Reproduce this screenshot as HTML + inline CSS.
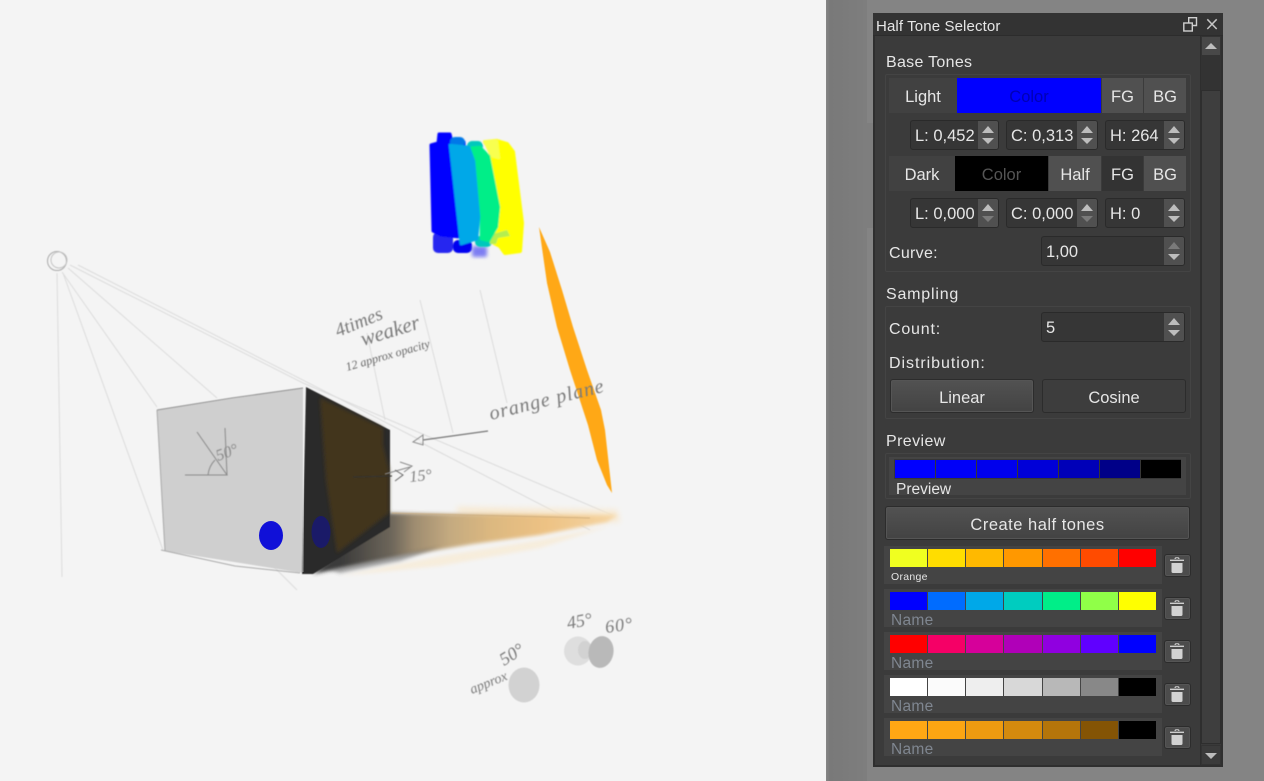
<!DOCTYPE html>
<html><head><meta charset="utf-8">
<style>
html,body{margin:0;padding:0;width:1264px;height:781px;overflow:hidden;background:#848484}
body{position:relative;font-family:"Liberation Sans",sans-serif;color:#e6e6e6}
.a{position:absolute;box-sizing:border-box}
.t{position:absolute;white-space:nowrap;font-size:16px;line-height:20px;color:#e6e6e6;margin-top:3.5px}
.c{position:absolute;box-sizing:border-box;display:flex;align-items:center;justify-content:center;font-size:16.5px;white-space:nowrap;color:#e6e6e6;padding-top:4px}
.g{position:absolute;box-sizing:border-box;border:1px solid #444;border-radius:2px}
.f{position:absolute;box-sizing:border-box;background:#363636;border:1px solid #2a2a2a;border-radius:3px;height:30px;font-size:16.5px;line-height:30px;white-space:nowrap;color:#e6e6e6;overflow:hidden;padding-left:4px}
.s{position:absolute;right:0;top:0;bottom:0;width:20px;background:#505050}
.u,.d{position:absolute;left:4px;width:0;height:0;border-left:6px solid transparent;border-right:6px solid transparent}
.u{top:5px;border-bottom:7px solid #bdbdbd}
.d{bottom:5px;border-top:6px solid #bdbdbd}
.dis.u{border-bottom-color:#7a7a7a}.dis.d{border-top-color:#7a7a7a}
.btn{background:linear-gradient(#525252,#434343);border:1px solid #2c2c2c;box-shadow:inset 0 0 0 1px #555;border-radius:3px}
.row{position:absolute;left:884px;width:278px;height:38px;background:#444;overflow:hidden}
.sw{position:absolute;top:3px;height:18px}
.nm{position:absolute;left:7px;top:22px;font-size:15.5px;line-height:20px;color:#7f8690;letter-spacing:.3px}
.tr{position:absolute;left:1164px;width:27px;height:23px;background:#4c4c4c;border:1px solid #2c2c2c;box-shadow:inset 0 0 0 1px #555;border-radius:3px;box-sizing:border-box}
</style></head><body>

<!-- canvas -->
<svg class="a" style="left:0;top:0" width="826" height="781" viewBox="0 0 826 781">
<defs>
<filter id="b1" x="-20%" y="-20%" width="140%" height="140%"><feGaussianBlur stdDeviation=".6"/></filter>
<filter id="b15" x="-20%" y="-20%" width="140%" height="140%"><feGaussianBlur stdDeviation=".9"/></filter>
<filter id="b2" x="-20%" y="-20%" width="140%" height="140%"><feGaussianBlur stdDeviation="1.8"/></filter>
<filter id="b3" x="-20%" y="-60%" width="140%" height="220%"><feGaussianBlur stdDeviation="3"/></filter>
<linearGradient id="sh" x1="340" y1="0" x2="615" y2="0" gradientUnits="userSpaceOnUse">
<stop offset="0" stop-color="#3a3a3a"/><stop offset=".19" stop-color="#6e675b"/><stop offset=".27" stop-color="#9e8c70"/><stop offset=".4" stop-color="#c4aa80"/><stop offset=".55" stop-color="#dcb880"/><stop offset=".75" stop-color="#edc284"/><stop offset="1" stop-color="#f6d6a4"/>
</linearGradient>
</defs>
<rect width="826" height="781" fill="#f4f4f4"/>
<g stroke="#dcdcdc" stroke-width="1" fill="none" filter="url(#b1)">
<path d="M57 273 L62 577"/><path d="M63 273 L163 550"/><path d="M62 272 L157 407"/><path d="M68 268 L217 398"/>
<path d="M70 265 L303 383 L612 515"/><path d="M78 265 L420 440"/>
<path d="M480 290 L507 403"/><path d="M420 300 L453 433"/><path d="M367 333 L385 420"/>
<path d="M260 553 L297 590"/><path d="M420 442 L590 530"/>
</g>
<!-- shadow -->
<g filter="url(#b1)">
<polygon points="457,507 617,510 620,522 520,520 457,513" fill="#f8e6c8" opacity=".8" filter="url(#b3)"/>
<polygon points="340,576 440,556 540,540 610,526 540,548 440,566" fill="#f8ead2" opacity=".7" filter="url(#b2)"/>
<polygon points="388,513 560,515 617,515 607,522 540,535 473,544 407,555 313,574" fill="url(#sh)" filter="url(#b2)"/>
<polygon points="330,570 380,559 440,547 400,561 340,573" fill="#555" opacity=".5" filter="url(#b2)"/>
<path d="M392 513 L590 518" stroke="#c8a878" stroke-width=".8" fill="none"/>
<!-- cube -->
<polygon points="157,410 303,388 303,573 165,551" fill="#cfcfcf"/>
<path d="M157 410 L232 398 L303 388" stroke="#8f8f8f" stroke-width="1" fill="none"/>
<path d="M157 410 L165 551" stroke="#a8a8a8" stroke-width="1" fill="none"/>
<path d="M161 550 L235 566 L300 573" stroke="#aaa" stroke-width="1" fill="none"/>
<polygon points="306,387 390,430 390,527 313,574 302,574" fill="#2a2a2a"/>
<polygon points="320,398 383,428 383,445 389,470 389,513 337,553 326,480" fill="#43351f" filter="url(#b2)"/>
</g>
<path d="M304 388 L303 572" stroke="#eee" stroke-width=".8" opacity=".6" fill="none"/>
<ellipse cx="271" cy="535.5" rx="12" ry="14.5" fill="#1010d8"/>
<ellipse cx="321" cy="532" rx="9.5" ry="16" fill="#1a1a68"/>
<!-- angle marks -->
<g fill="none" stroke="#8a8a8a" stroke-width="1" filter="url(#b1)">
<path d="M185 475 L227 475 L197 432"/><path d="M225 428 L227 475"/><path d="M208 475 Q209 466 215 460"/>
<path d="M353 477 L392 476" stroke="#333"/><path d="M385 474 L410 467 M400 462 L412 466 L404 472"/>
<path d="M423 440 L488 431" stroke="#777" stroke-width="1.3"/><path d="M423 435 L413 442 L423 445 Z"/>
<path d="M395 470 L403 475 L395 481" stroke="#666"/>
</g>
<g fill="none" filter="url(#b1)"><circle cx="57" cy="261" r="9.5" stroke="#aaa" stroke-width="1"/><circle cx="59" cy="260" r="8" stroke="#c4c4c4" stroke-width="1"/></g>
<!-- orange plane -->
<polygon points="539,227 550,252 562,290 573,327 587,370 601,410 605,430 612,493 607,485 597,460 588,425 570,370 557,327 547,283" fill="#ffa814" filter="url(#b1)"/>
<!-- colour strokes -->
<g filter="url(#b15)" stroke-linejoin="round">
<rect x="433" y="232" width="20" height="21" rx="5" fill="#2828f0"/>
<rect x="453" y="240" width="19" height="13" rx="5" fill="#0000f0"/>
<rect x="472" y="246" width="15" height="11" rx="2" fill="#6060f2" opacity=".8" filter="url(#b2)"/>
<polygon points="431,145 438,143 439,134 450,134 452,142 464,142 469,238 441,235 433,231" fill="#0000ff" stroke="#0000ff" stroke-width="3"/>
<rect x="450" y="137" width="15" height="10" rx="5" fill="#0478e8"/>
<rect x="467" y="141" width="16" height="10" rx="5" fill="#00c8bc"/>
<rect x="475" y="236" width="17" height="11" rx="5" fill="#00c8bc"/>
<polygon points="485,142 497,141 507,144 513,152 522,223 520,251 505,253 500,246 494,243 492,152" fill="#ffff00" stroke="#ffff00" stroke-width="4"/>
<polygon points="484,141 497,141 499,158 491,156" fill="#f8ff50" stroke="#f8ff50" stroke-width="2"/>
<polygon points="490,235 507,230 510,236 498,238 496,244 490,244" fill="#b4ee50"/>
<polygon points="469,148 480,147 489,156 499,207 497,227 489,241 481,239 481,217 474,167" fill="#00ee88" stroke="#00ee88" stroke-width="2.5"/>
<polygon points="450,145 469,147 474,161 479,217 477,239 461,244 458,217" fill="#00a8e8" stroke="#00a8e8" stroke-width="2.5"/>
</g>
<!-- blobs -->
<g filter="url(#b1)">
<ellipse cx="524" cy="685" rx="15.5" ry="17.5" fill="#d2d2d2"/>
<ellipse cx="578" cy="651" rx="14" ry="14.5" fill="#dedede"/>
<ellipse cx="585" cy="650" rx="7" ry="9" fill="#d2d2d2"/>
<ellipse cx="601" cy="652" rx="12.5" ry="16" fill="#b9b9b9" transform="rotate(10 601 652)"/>
</g>
<!-- handwriting -->
<g font-family="'Liberation Serif',serif" font-style="italic" fill="#7a7a7a" filter="url(#b1)">
<text x="338" y="337" font-size="19" transform="rotate(-22 338 337)">4times</text>
<text x="363" y="346" font-size="21" transform="rotate(-17 363 346)">weaker</text>
<text x="347" y="371" font-size="12" fill="#666" transform="rotate(-16 347 371)">12 approx opacity</text>
<text x="491" y="420" font-size="20" letter-spacing="1" transform="rotate(-14 491 420)">orange plane</text>
<text x="218" y="461" font-size="16" fill="#8a8a8a" transform="rotate(-20 218 461)">50°</text>
<text x="410" y="482" font-size="16" fill="#808080" transform="rotate(-6 410 482)">15°</text>
<text x="504" y="666" font-size="18" transform="rotate(-32 504 666)">50°</text>
<text x="472" y="694" font-size="14" transform="rotate(-22 472 694)">approx</text>
<text x="568" y="629" font-size="18" transform="rotate(-10 568 629)">45°</text>
<text x="606" y="633" font-size="18" letter-spacing="1" transform="rotate(-8 606 633)">60°</text>
</g>
</svg>

<!-- gutter -->
<div class="a" style="left:826px;top:0;width:41px;height:781px;background:linear-gradient(90deg,#858585,#797979 4px,#7b7b7b 20px,#7e7e7e)"></div>
<div class="a" style="left:867px;top:123px;width:6px;height:105px;background:#7e7e7e"></div>

<!-- panel -->
<div class="a" style="left:873px;top:13px;width:350px;height:754px;background:#3b3b3b;border:2px solid #2f2f2f;border-top:0"></div>
<div class="a" style="left:873px;top:13px;width:350px;height:23px;background:#333;border-bottom:1px solid #2c2c2c"></div>
<div class="t" style="left:876px;top:13.5px;font-size:15px;letter-spacing:.12px">Half Tone Selector</div>
<svg class="a" style="left:1183px;top:16px" width="36" height="16" viewBox="0 0 36 16"><g fill="none" stroke="#cfcfcf" stroke-width="1.4"><path d="M5.7 6.5V1.7H13.5V9.5H9.5"/><rect x=".8" y="7" width="8.5" height="8"/><path d="M24.3 3.3L33.7 13M33.7 3.3L24.3 13" stroke-width="1.5" stroke="#c4c4c4"/></g></svg>

<!-- scrollbar -->
<div class="a" style="left:1200px;top:36px;width:21px;height:729px;background:#3a3a3a;border-left:1px solid #2e2e2e"></div>
<div class="a" style="left:1201px;top:36px;width:20px;height:20px;background:#484848;border:1px solid #333"></div>
<div class="a" style="left:1205px;top:43px;width:0;height:0;border-left:6px solid transparent;border-right:6px solid transparent;border-bottom:6px solid #bdbdbd"></div>
<div class="a" style="left:1201px;top:56px;width:20px;height:34px;background:#333"></div>
<div class="a" style="left:1201px;top:90px;width:20px;height:654px;background:#3e3e3e;border:1px solid #2e2e2e"></div>
<div class="a" style="left:1201px;top:745px;width:20px;height:20px;background:#3b3b3b;border:1px solid #333"></div>
<div class="a" style="left:1205px;top:753px;width:0;height:0;border-left:6px solid transparent;border-right:6px solid transparent;border-top:6px solid #bdbdbd"></div>

<!-- Base tones -->
<div class="t" style="left:886px;top:49px;letter-spacing:.3px">Base Tones</div>
<div class="g" style="left:885px;top:74px;width:306px;height:198px"></div>
<div class="c" style="left:889px;top:78px;width:68px;height:35px;background:#414141">Light</div>
<div class="c" style="left:957px;top:78px;width:144px;height:35px;background:#0000ff;color:#0000b4">Color</div>
<div class="c" style="left:1102px;top:78px;width:41px;height:35px;background:#505050">FG</div>
<div class="c" style="left:1144px;top:78px;width:42px;height:35px;background:#505050">BG</div>

<div class="f" style="left:910px;top:120px;width:89px">L: 0,452<div class="s"><i class="u"></i><i class="d"></i></div></div>
<div class="f" style="left:1006px;top:120px;width:92px">C: 0,313<div class="s"><i class="u"></i><i class="d"></i></div></div>
<div class="f" style="left:1105px;top:120px;width:80px">H: 264<div class="s"><i class="u"></i><i class="d"></i></div></div>

<div class="c" style="left:889px;top:156px;width:66px;height:35px;background:#414141">Dark</div>
<div class="c" style="left:955px;top:156px;width:93px;height:35px;background:#000;color:#555">Color</div>
<div class="c" style="left:1049px;top:156px;width:52px;height:35px;background:#505050">Half</div>
<div class="c" style="left:1102px;top:156px;width:41px;height:35px;background:#333">FG</div>
<div class="c" style="left:1144px;top:156px;width:42px;height:35px;background:#505050">BG</div>

<div class="f" style="left:910px;top:198px;width:89px">L: 0,000<div class="s"><i class="u"></i><i class="d dis"></i></div></div>
<div class="f" style="left:1006px;top:198px;width:92px">C: 0,000<div class="s"><i class="u"></i><i class="d dis"></i></div></div>
<div class="f" style="left:1105px;top:198px;width:80px">H: 0<div class="s"><i class="u"></i><i class="d"></i></div></div>

<div class="t" style="left:889px;top:240px;letter-spacing:.3px">Curve:</div>
<div class="f" style="left:1041px;top:236px;width:144px">1,00<div class="s"><i class="u dis"></i><i class="d"></i></div></div>

<!-- Sampling -->
<div class="t" style="left:886px;top:281px;letter-spacing:.8px">Sampling</div>
<div class="g" style="left:885px;top:306px;width:306px;height:113px"></div>
<div class="t" style="left:889px;top:316px;letter-spacing:.8px">Count:</div>
<div class="f" style="left:1041px;top:312px;width:144px">5<div class="s"><i class="u"></i><i class="d"></i></div></div>
<div class="t" style="left:889px;top:350px;letter-spacing:.95px">Distribution:</div>
<div class="c btn" style="left:890px;top:379px;width:144px;height:34px">Linear</div>
<div class="c" style="left:1042px;top:379px;width:144px;height:34px;background:#3d3d3d;border:1px solid #2c2c2c;border-radius:3px">Cosine</div>

<!-- Preview -->
<div class="t" style="left:886px;top:428px;letter-spacing:.4px">Preview</div>
<div class="g" style="left:885px;top:453px;width:306px;height:46px"></div>
<div class="a" style="left:889px;top:457px;width:297px;height:38px;background:#444;overflow:hidden">
  <div class="a" style="left:5px;top:2px;width:287px;height:20px;background:#363636"></div>
  <div class="a" style="left:6px;top:3px;width:40px;height:18px;background:#0000ff"></div>
  <div class="a" style="left:47px;top:3px;width:40px;height:18px;background:#0000f8"></div>
  <div class="a" style="left:88px;top:3px;width:40px;height:18px;background:#0000ec"></div>
  <div class="a" style="left:129px;top:3px;width:40px;height:18px;background:#0000d8"></div>
  <div class="a" style="left:170px;top:3px;width:40px;height:18px;background:#0000b8"></div>
  <div class="a" style="left:211px;top:3px;width:40px;height:18px;background:#000088"></div>
  <div class="a" style="left:252px;top:3px;width:40px;height:18px;background:#000"></div>
  <div class="t" style="left:7px;top:19px;font-size:15.5px">Preview</div>
</div>

<div class="c btn" style="left:885px;top:506px;width:305px;height:34px;letter-spacing:.5px">Create half tones</div>

<!-- rows -->
<div class="row" style="top:546px">
<div class="sw" style="left:6px;width:37px;background:#f0ff20"></div><div class="sw" style="left:44px;width:37px;background:#ffdd00"></div><div class="sw" style="left:82px;width:37px;background:#ffb900"></div><div class="sw" style="left:120px;width:38px;background:#ff9800"></div><div class="sw" style="left:159px;width:37px;background:#ff7000"></div><div class="sw" style="left:197px;width:37px;background:#ff4b00"></div><div class="sw" style="left:235px;width:37px;background:#ff0000"></div>
<div class="nm" style="font-size:10.5px;top:21px;color:#e6e6e6">Orange</div></div>
<div class="row" style="top:589px">
<div class="sw" style="left:6px;width:37px;background:#0000ff"></div><div class="sw" style="left:44px;width:37px;background:#006cff"></div><div class="sw" style="left:82px;width:37px;background:#00a8e8"></div><div class="sw" style="left:120px;width:38px;background:#00ccbf"></div><div class="sw" style="left:159px;width:37px;background:#00ee88"></div><div class="sw" style="left:197px;width:37px;background:#90ff48"></div><div class="sw" style="left:235px;width:37px;background:#ffff00"></div>
<div class="nm">Name</div></div>
<div class="row" style="top:632px">
<div class="sw" style="left:6px;width:37px;background:#ff0000"></div><div class="sw" style="left:44px;width:37px;background:#f50066"></div><div class="sw" style="left:82px;width:37px;background:#d6009a"></div><div class="sw" style="left:120px;width:38px;background:#b000b8"></div><div class="sw" style="left:159px;width:37px;background:#9000e0"></div><div class="sw" style="left:197px;width:37px;background:#6000ff"></div><div class="sw" style="left:235px;width:37px;background:#0000ff"></div>
<div class="nm">Name</div></div>
<div class="row" style="top:675px">
<div class="sw" style="left:6px;width:37px;background:#ffffff"></div><div class="sw" style="left:44px;width:37px;background:#fbfbfb"></div><div class="sw" style="left:82px;width:37px;background:#eeeeee"></div><div class="sw" style="left:120px;width:38px;background:#d8d8d8"></div><div class="sw" style="left:159px;width:37px;background:#b8b8b8"></div><div class="sw" style="left:197px;width:37px;background:#888888"></div><div class="sw" style="left:235px;width:37px;background:#000000"></div>
<div class="nm">Name</div></div>
<div class="row" style="top:718px">
<div class="sw" style="left:6px;width:37px;background:#ffa714"></div><div class="sw" style="left:44px;width:37px;background:#fca512"></div><div class="sw" style="left:82px;width:37px;background:#ee9b10"></div><div class="sw" style="left:120px;width:38px;background:#d48a0e"></div><div class="sw" style="left:159px;width:37px;background:#b5750a"></div><div class="sw" style="left:197px;width:37px;background:#845405"></div><div class="sw" style="left:235px;width:37px;background:#000000"></div>
<div class="nm">Name</div></div>

<!-- trash buttons -->
<div class="tr" style="top:554px"><svg class="a" style="left:5px;top:1px" width="15" height="19" viewBox="0 0 15 19"><path d="M0 3.6H14V5H0Z M4.5 3Q4.5 1.2 6 1.2H8Q9.5 1.2 9.5 3H8.3Q8.3 2.2 7.8 2.2H6.2Q5.7 2.2 5.7 3Z" fill="#cfcfcf"/><path d="M1.5 7H12.5V15.5Q12.5 17 11 17H3Q1.5 17 1.5 15.5Z" fill="#d2d2d2"/></svg></div>
<div class="tr" style="top:597px"><svg class="a" style="left:5px;top:1px" width="15" height="19" viewBox="0 0 15 19"><path d="M0 3.6H14V5H0Z M4.5 3Q4.5 1.2 6 1.2H8Q9.5 1.2 9.5 3H8.3Q8.3 2.2 7.8 2.2H6.2Q5.7 2.2 5.7 3Z" fill="#cfcfcf"/><path d="M1.5 7H12.5V15.5Q12.5 17 11 17H3Q1.5 17 1.5 15.5Z" fill="#d2d2d2"/></svg></div>
<div class="tr" style="top:640px"><svg class="a" style="left:5px;top:1px" width="15" height="19" viewBox="0 0 15 19"><path d="M0 3.6H14V5H0Z M4.5 3Q4.5 1.2 6 1.2H8Q9.5 1.2 9.5 3H8.3Q8.3 2.2 7.8 2.2H6.2Q5.7 2.2 5.7 3Z" fill="#cfcfcf"/><path d="M1.5 7H12.5V15.5Q12.5 17 11 17H3Q1.5 17 1.5 15.5Z" fill="#d2d2d2"/></svg></div>
<div class="tr" style="top:683px"><svg class="a" style="left:5px;top:1px" width="15" height="19" viewBox="0 0 15 19"><path d="M0 3.6H14V5H0Z M4.5 3Q4.5 1.2 6 1.2H8Q9.5 1.2 9.5 3H8.3Q8.3 2.2 7.8 2.2H6.2Q5.7 2.2 5.7 3Z" fill="#cfcfcf"/><path d="M1.5 7H12.5V15.5Q12.5 17 11 17H3Q1.5 17 1.5 15.5Z" fill="#d2d2d2"/></svg></div>
<div class="tr" style="top:726px"><svg class="a" style="left:5px;top:1px" width="15" height="19" viewBox="0 0 15 19"><path d="M0 3.6H14V5H0Z M4.5 3Q4.5 1.2 6 1.2H8Q9.5 1.2 9.5 3H8.3Q8.3 2.2 7.8 2.2H6.2Q5.7 2.2 5.7 3Z" fill="#cfcfcf"/><path d="M1.5 7H12.5V15.5Q12.5 17 11 17H3Q1.5 17 1.5 15.5Z" fill="#d2d2d2"/></svg></div>
</body></html>
